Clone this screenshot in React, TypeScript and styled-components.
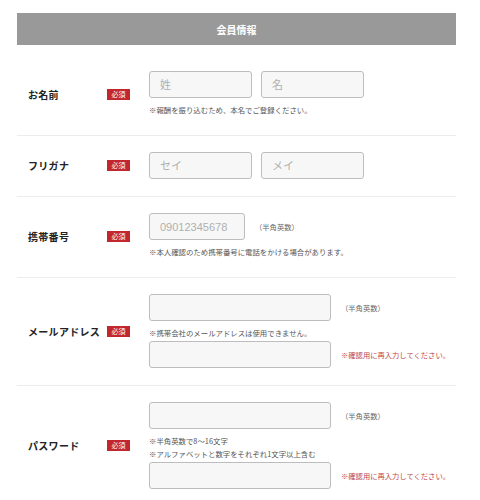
import React from "react";
import styled, { createGlobalStyle } from "styled-components";

const Global = createGlobalStyle`
  html, body { margin: 0; padding: 0; background: #fff; }
  body { font-family: "Liberation Sans", "Noto Sans CJK JP", sans-serif; color: #222; }
  * { box-sizing: border-box; }
`;

const Page = styled.div`
  padding: 13px 0 0 17px;
  width: 456px;
`;

const Header = styled.div`
  height: 32px;
  background: #999999;
  color: #fff;
  font-weight: bold;
  font-size: 10px;
  display: flex;
  align-items: center;
  justify-content: center;
  font-family: "Noto Sans CJK JP", sans-serif;
`;

const Body = styled.div`
  padding-top: 10px;
`;

const Row = styled.div<{ $last?: boolean }>`
  display: flex;
  align-items: center;
  padding: 16px 0 17px 11px;
  border-bottom: ${(p) => (p.$last ? "none" : "1px solid #ececec")};
`;

const Label = styled.div`
  width: 79px;
  font-size: 10px;
  font-weight: bold;
  color: #222;
  letter-spacing: 0.3px;
  font-family: "Noto Sans CJK JP", sans-serif;
`;

const Badge = styled.div`
  width: 23px;
  height: 11px;
  background: #c1272d;
  color: #fff;
  font-size: 7px;
  line-height: 11px;
  text-align: center;
  margin-right: 19px;
  font-family: "Noto Sans CJK JP", sans-serif;
`;

const Fields = styled.div`
  display: flex;
  flex-direction: column;
`;

const Line = styled.div`
  display: flex;
  align-items: center;
  gap: 9px;
  height: 27px;
`;

const Input = styled.input<{ $w: number }>`
  width: ${(p) => p.$w}px;
  height: 27px;
  border: 1px solid #bdbdbd;
  border-radius: 3px;
  background: #f7f7f7;
  padding: 0 10px;
  font-size: 11px;
  font-family: "Liberation Sans", "Noto Sans CJK JP", sans-serif;
  color: #333;
  outline: none;
  margin: 0;
  &::placeholder { color: #b0b0b0; }
`;

const Note = styled.div`
  font-size: 7.4px;
  line-height: 13px;
  color: #555;
  margin: 5px 0 2px;
  font-family: "Noto Sans CJK JP", sans-serif;
  white-space: nowrap;
`;

const Aside = styled.span<{ $red?: boolean }>`
  font-size: 7.3px;
  line-height: 12px;
  color: ${(p) => (p.$red ? "#c0444a" : "#666")};
  margin-left: 1px;
  font-family: "Noto Sans CJK JP", sans-serif;
  white-space: nowrap;
`;

export default function App() {
  return (
    <>
      <Global />
      <Page>
        <Header>会員情報</Header>
        <Body>
          <Row>
            <Label>お名前</Label>
            <Badge>必須</Badge>
            <Fields>
              <Line>
                <Input $w={103} placeholder="姓" />
                <Input $w={103} placeholder="名" />
              </Line>
              <Note>※報酬を振り込むため、本名でご登録ください。</Note>
            </Fields>
          </Row>
          <Row>
            <Label>フリガナ</Label>
            <Badge>必須</Badge>
            <Fields>
              <Line>
                <Input $w={103} placeholder="セイ" />
                <Input $w={103} placeholder="メイ" />
              </Line>
            </Fields>
          </Row>
          <Row>
            <Label>携帯番号</Label>
            <Badge>必須</Badge>
            <Fields>
              <Line>
                <Input $w={96} placeholder="09012345678" />
                <Aside>（半角英数）</Aside>
              </Line>
              <Note>※本人確認のため携帯番号に電話をかける場合があります。</Note>
            </Fields>
          </Row>
          <Row>
            <Label>メールアドレス</Label>
            <Badge>必須</Badge>
            <Fields>
              <Line>
                <Input $w={182} />
                <Aside>（半角英数）</Aside>
              </Line>
              <Note>※携帯会社のメールアドレスは使用できません。</Note>
              <Line>
                <Input $w={182} />
                <Aside $red>※確認用に再入力してください。</Aside>
              </Line>
            </Fields>
          </Row>
          <Row $last>
            <Label>パスワード</Label>
            <Badge>必須</Badge>
            <Fields>
              <Line>
                <Input $w={182} type="password" />
                <Aside>（半角英数）</Aside>
              </Line>
              <Note>
                ※半角英数で8～16文字
                <br />
                ※アルファベットと数字をそれぞれ1文字以上含む
              </Note>
              <Line>
                <Input $w={182} type="password" />
                <Aside $red>※確認用に再入力してください。</Aside>
              </Line>
            </Fields>
          </Row>
        </Body>
      </Page>
    </>
  );
}
